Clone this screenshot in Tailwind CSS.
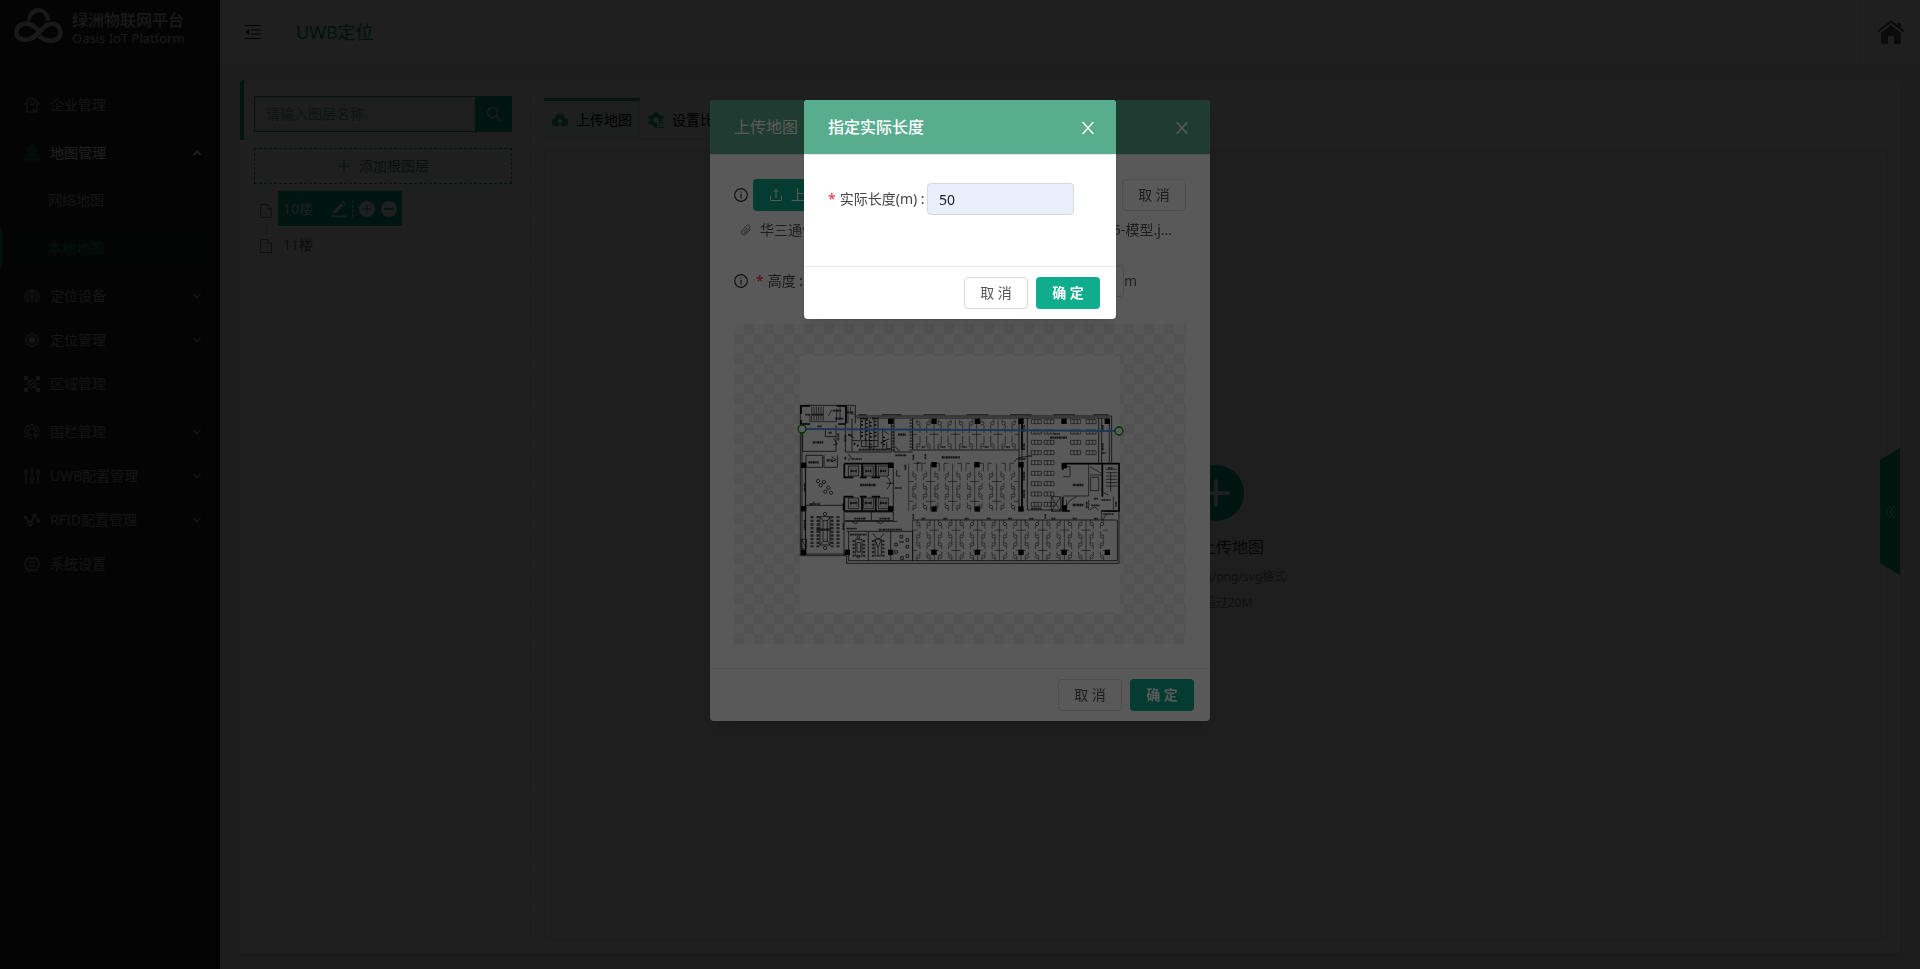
<!DOCTYPE html>
<html lang="zh-CN">
<head>
    <meta charset="UTF-8">
    <meta name="viewport" content="width=device-width, initial-scale=1.0">
    <title>UWB定位 - 绿洲物联网平台</title>
    <script src="https://cdn.jsdelivr.net/npm/@tailwindcss/browser@4"></script>
</head>
<body class="h-screen overflow-hidden font-['Noto_Sans','Noto_Sans_CJK_SC',sans-serif] text-sm text-[#444]">
    <div class="flex h-full">

        <!-- Sidebar -->
        <aside class="w-[220px] shrink-0 bg-[#2a2a2a] text-[#a6a6a6]">
            <div class="flex h-16 items-start gap-2 pl-3.5 pt-2 text-[#d0d0d0]">
                <svg class="h-[35px] w-[50px]" viewBox="0 0 50 35" fill="none" stroke="currentColor">
                    <path d="M15 10C18 -1 33 -1 34 13" stroke-width="4"/>
                    <path d="M14 16C14 9 19 4 25 3" stroke-width="2"/>
                    <path d="M24 22C16 13 4 14 2.500 23C1 33 14 34 21 28C29 21 33 14 40 16C48 18 49 30 41 32C35 34 30 32 25 28" stroke-width="4.500"/>
                </svg>
                <div class="pt-0.5">
                    <div class="text-base leading-5 font-medium">绿洲物联网平台</div>
                    <div class="text-[13px] leading-4">Oasis IoT Platform</div>
                </div>
            </div>
            <nav class="pt-[21px]">
                <ul>
                    <li class="mb-2"><a href="#" class="flex h-10 items-center pl-6">
                        <svg class="mr-2.5 size-4" viewBox="0 0 16 16" fill="none" stroke="currentColor" stroke-width="1.2"><path d="M3 15V7H1L5 3V1h2l1-.5L15 7h-2v5a2 2 0 0 1-4 0M3 15h10M7 4v3l3 1V5"/></svg>
                        企业管理</a></li>
                    <li class="mb-1"><a href="#" class="flex h-10 items-center pl-6 text-white">
                        <svg class="mr-2.5 size-4 text-[#02a87c]" viewBox="0 0 16 16" fill="none" stroke="currentColor" stroke-width="1.2"><path d="M8 11C5 8 4 6.500 4 4.500a4 4 0 0 1 8 0C12 6.500 11 8 8 11zM4 9H3L1 15h14l-2-6h-1M4 15l3-4M12 15l-3-4"/><circle cx="8" cy="4.500" r="1.500"/></svg>
                        地图管理
                        <svg class="ml-auto mr-[18px] size-2.5" viewBox="0 0 10 10" fill="none" stroke="currentColor" stroke-width="2"><path d="M1.500 7L5 3.500L8.500 7"/></svg></a></li>
                </ul>
                <ul class="bg-[#252525] pt-[3px]">
                    <li class="mb-2"><a href="#" class="flex h-10 items-center pl-12">网络地图</a></li>
                    <li class="pb-2"><a href="#" class="flex h-10 items-center border-l-2 border-[#02a87c] bg-[#1a2a25] pl-[46px] text-[#02a87c]">本地地图</a></li>
                </ul>
                <ul>
                    <li class="mb-1"><a href="#" class="flex h-10 items-center pl-6">
                        <svg class="mr-2.5 size-4" viewBox="0 0 16 16" fill="none" stroke="currentColor" stroke-width="1.200"><path d="M5 1.700a7 7 0 0 0 0 12.600M11 1.700a7 7 0 0 1 0 12.600M8 8v7M6 12a4.500 4.500 0 1 1 4 0M7 1v2h2V1"/><circle cx="8" cy="8" r="1.800"/></svg>
                        定位设备
                        <svg class="ml-auto mr-[18px] size-2.5" viewBox="0 0 10 10" fill="none" stroke="currentColor" stroke-width="1.500"><path d="M1.500 3L5 6.500L8.500 3"/></svg></a></li>
                    <li class="mb-1"><a href="#" class="flex h-10 items-center pl-6">
                        <svg class="mr-2.5 size-4" viewBox="0 0 16 16" fill="none" stroke="currentColor" stroke-width="1.200"><circle cx="8" cy="8" r="6"/><circle cx="8" cy="8" r="2.800" fill="currentColor"/><path d="M8 0v16M0 8h16"/></svg>
                        定位管理
                        <svg class="ml-auto mr-[18px] size-2.5" viewBox="0 0 10 10" fill="none" stroke="currentColor" stroke-width="1.500"><path d="M1.500 3L5 6.500L8.500 3"/></svg></a></li>
                    <li class="mb-2"><a href="#" class="flex h-10 items-center pl-6">
                        <svg class="mr-2.5 size-4" viewBox="0 0 16 16" fill="none" stroke="currentColor" stroke-width="1.300"><path d="M0 0h4v4H0zM12 0h4v4h-4zM0 12h4v4H0zM12 12h4v4h-4z" fill="currentColor" stroke="none"/><path d="M3 9L9 3M3 13L13 3M7 13L13 7M4 4l2 2M10 10l3 3"/></svg>
                        区域管理</a></li>
                    <li class="mb-1"><a href="#" class="flex h-10 items-center pl-6">
                        <svg class="mr-2.5 size-4" viewBox="0 0 16 16" fill="none" stroke="currentColor" stroke-width="1.300"><path d="M8 15L2.500 12.500L.8 7L3.500 2L8 .8L13 2.500L15 7L14 9"/><path d="M8 11.500L5 10.500L4 7L6.500 4.200H10L12 7V8.500"/><path d="M9 9l6.500 2.300-2.700 1-1 2.900z" fill="currentColor" stroke="none"/></svg>
                        围栏管理
                        <svg class="ml-auto mr-[18px] size-2.5" viewBox="0 0 10 10" fill="none" stroke="currentColor" stroke-width="1.500"><path d="M1.500 3L5 6.500L8.500 3"/></svg></a></li>
                    <li class="mb-1"><a href="#" class="flex h-10 items-center pl-6">
                        <svg class="mr-2.5 size-4" viewBox="0 0 16 16" fill="none" stroke="currentColor" stroke-width="1.400"><path d="M2 0v2.500M2 6.500V16M8 0v8.500M8 12.500V16M14 0v2.500M14 6.500V16"/><circle cx="2" cy="4.500" r="1.600"/><circle cx="8" cy="10.500" r="1.600"/><circle cx="14" cy="4.500" r="1.600"/></svg>
                        UWB配置管理
                        <svg class="ml-auto mr-[18px] size-2.5" viewBox="0 0 10 10" fill="none" stroke="currentColor" stroke-width="1.500"><path d="M1.500 3L5 6.500L8.500 3"/></svg></a></li>
                    <li class="mb-1"><a href="#" class="flex h-10 items-center pl-6">
                        <svg class="mr-2.5 size-4" viewBox="0 0 16 16" fill="none" stroke="currentColor" stroke-width="1.400"><path d="M1.500 6l3.500 4M7.500 10L10.500 3L14.500 9"/><circle cx="6" cy="11.500" r="2"/><path d="M0 4h3v3H0zM9 1.500h3v3H9zM13 7.500h3v3h-3z" fill="currentColor" stroke="none"/></svg>
                        RFID配置管理
                        <svg class="ml-auto mr-[18px] size-2.5" viewBox="0 0 10 10" fill="none" stroke="currentColor" stroke-width="1.500"><path d="M1.500 3L5 6.500L8.500 3"/></svg></a></li>
                    <li><a href="#" class="flex h-10 items-center pl-6">
                        <svg class="mr-2.5 size-4" viewBox="0 0 16 16" fill="none" stroke="currentColor" stroke-width="1.400"><path d="M5 1.500l1.500 1h3l1.500-1 2 1.200v2L14 6l1 .7v2.600L14 10l-1 1.500v2l-2 1.200-1.500-1h-3L5 14.700l-2-1.200v-2L2 10l-1-.7V6.700L2 6l1-1.300v-2z"/><circle cx="8" cy="8" r="2.400"/></svg>
                        系统设置</a></li>
                </ul>
            </nav>
        </aside>

        <div class="flex min-w-0 flex-1 flex-col bg-[#f0f0f0]">
            <!-- Top bar -->
            <header class="flex h-16 shrink-0 items-center bg-white pl-[25px]">
                <button type="button" aria-label="收起菜单">
                    <svg class="h-4 w-4" viewBox="0 0 16 16" fill="none" stroke="#333" stroke-width="1.200"><path d="M0 1.500h16M5.500 6h10.500M5.500 10h10.500M0 14.500h16"/><path d="M4 5v6L.5 8z" fill="#333" stroke="none"/></svg>
                </button>
                <h1 class="ml-[35px] text-lg text-[#0a9a76]">UWB定位</h1>
                <a href="#" aria-label="首页" class="ml-auto flex h-full w-[60px] items-center justify-center border-l border-[#e4e4e4]">
                    <svg class="h-6 w-7" viewBox="0 0 28 24" fill="#5c5c5c"><path d="M14 5L4 13v9a2 2 0 0 0 2 2h5v-8h6v8h5a2 2 0 0 0 2-2v-9z"/><path d="M1 11.500L14 1.500L27 11.500" fill="none" stroke="#fff" stroke-width="5"/><path d="M20 3h4v5l-4-3z"/><path d="M1 11.500L14 1.500L27 11.500" fill="none" stroke="#5c5c5c" stroke-width="2"/></svg>
                </a>
            </header>

            <main class="relative mx-5 mb-4 mt-4 flex min-h-0 flex-1 rounded bg-white py-3 pr-3 shadow-md">
                <div class="absolute left-0 top-0 h-[60px] w-1 rounded-tl bg-[#02b07c]"></div>

                <!-- Layer tree -->
                <section class="my-1 w-[291px] shrink-0 border-r border-dashed border-[#d4d4d4] pl-3.5 pr-[18px]">
                    <form class="flex h-9">
                        <input type="text" aria-label="图层名称" placeholder="请输入图层名称" class="min-w-0 flex-1 border border-[#0fa384] bg-[#eef7f4] pl-[11px] placeholder-[#84a69c]">
                        <button type="button" aria-label="搜索" class="flex w-9 items-center justify-center bg-[#02b07c]">
                            <svg class="size-4" viewBox="0 0 16 16" fill="none" stroke="#fff" stroke-width="1.200"><circle cx="6.500" cy="6.500" r="5"/><path d="M10 10l5 5"/></svg>
                        </button>
                    </form>
                    <button type="button" class="mt-4 flex h-9 w-full items-center justify-center gap-2 border border-dashed border-[#0fa384] text-[#54887a]">
                        <svg class="size-3.5" viewBox="0 0 14 14" fill="none" stroke="currentColor" stroke-width="1.200"><path d="M7 1v12M1 7h12"/></svg>
                        添加根图层
                    </button>
                    <ul class="mt-[7px] pl-1.5">
                        <li class="flex h-[35px] items-center">
                            <svg class="mr-1.5 mt-1 h-3.5 w-3" viewBox="0 0 12 14" fill="none" stroke="#8a8a8a"><path d="M.5.5h7l4 4v9H.5zM7.500.5v4h4"/></svg>
                            <div class="flex h-full w-[124px] items-center bg-[#02b07c] pl-[5px] text-white">
                                10楼
                                <svg class="ml-auto size-4" viewBox="0 0 16 16" fill="#fff"><path d="M0 14.500h16V16H0zM1.500 13l1-3.500L10 2l2.500 2.500L5 12zM11 1l1-1 2.500 2.500-1 1z"/></svg>
                                <span class="ml-[5px] h-[17px] border-l border-dashed border-white"></span>
                                <svg class="ml-1.5 size-4" viewBox="0 0 16 16"><circle cx="8" cy="8" r="8" fill="#fff"/><path d="M8 4v8M4 8h8" stroke="#02b07c"/></svg>
                                <svg class="ml-1.5 mr-[5px] size-4" viewBox="0 0 16 16"><circle cx="8" cy="8" r="8" fill="#fff"/><path d="M3 8h10" stroke="#02b07c" stroke-width="1.500"/></svg>
                            </div>
                        </li>
                        <li class="flex h-[38px] items-center">
                            <svg class="mr-1.5 h-[38px] w-3 shrink-0" viewBox="0 0 12 38" fill="none" stroke="#8a8a8a"><path d="M6.500 0v8" stroke="#d0d0d0"/><path d="M.5 13.500h7l4 4v9H.5zM7.500 13.500v4h4"/></svg>
                            <span class="pl-[5px] text-[#666]">11楼</span>
                        </li>
                    </ul>
                </section>

                <!-- Map area -->
                <section class="flex min-w-0 flex-1 flex-col pl-[13px]">
                    <div class="mt-1.5 flex h-10 w-fit shadow">
                        <button type="button" class="flex w-24 items-center gap-2 border-r border-t-[3px] border-r-[#ddd] border-t-[#02b07c] bg-[#f0f7f5] pl-2 text-black">
                            <svg class="h-4 w-4" viewBox="0 0 16 16" fill="#02b07c"><path d="M8 2a4.500 4.500 0 0 1 4.300 4A4 4 0 0 1 12 14H9V10h2L8 6 5 10h2v4H4A4 4 0 0 1 3.700 6 4.500 4.500 0 0 1 8 2z"/></svg>
                            上传地图
                        </button>
                        <button type="button" class="flex w-28 items-center gap-2 pl-2 pt-[3px] text-black">
                            <svg class="h-4 w-4" viewBox="0 0 16 16"><circle cx="8" cy="8" r="4.500" fill="none" stroke="#02b07c" stroke-width="3.500"/><path d="M8 0v3M8 13v3M1 4l3 2M1 12l3-2M12 6l3-2" stroke="#02b07c" stroke-width="3.500"/><path d="M9 9h7v7H9z" fill="#fff"/><path d="M10 10.500h6M10 13h6M10 15.500h6" stroke="#02b07c"/></svg>
                            设置比例尺
                        </button>
                    </div>
                    <div class="mt-3 flex flex-1 flex-col items-center rounded border border-[#e2e4e4] bg-[#f5f5f5] pt-[314px]">
                        <svg class="size-14" viewBox="0 0 56 56"><circle cx="28" cy="28" r="28" fill="#02b07c"/><path d="M28 16v24M16 28h24" stroke="#fff" stroke-width="4" stroke-linecap="round"/></svg>
                        <p class="mt-3.5 text-base">点击上传地图</p>
                        <p class="mt-2.5 text-xs text-[#888]">图片支持jpg/png/svg格式</p>
                        <p class="mt-2.5 text-xs text-[#888]">不能超过20M</p>
                    </div>
                </section>

                <button type="button" aria-label="展开" class="absolute right-0 top-[368px] flex h-[127px] w-5 items-center justify-center bg-[#02b07c] [clip-path:polygon(0_12px,100%_0,100%_100%,0_115px)]">
                    <svg class="mr-0 h-3 w-2.5" viewBox="0 0 10 12" fill="none" stroke="#fff"><path d="M5 0L.700 6L5 12M9.500 0L5.200 6L9.500 12"/></svg>
                </button>
            </main>
        </div>
    </div>

    <!-- Upload dialog -->
    <div class="fixed inset-0 bg-black/65 pt-[100px]">
        <div role="dialog" aria-label="上传地图" class="mx-auto w-[500px] overflow-hidden rounded bg-white shadow-lg">
            <div class="flex h-[55px] items-center justify-between border-b border-[#e8e8e8] bg-[#58ad8e] px-6 text-white">
                <h2 class="text-base">上传地图</h2>
                <button type="button" aria-label="关闭" class="-mr-0.5 mt-0.5">
                    <svg class="size-3" viewBox="0 0 12 12" fill="none" stroke="#fff" stroke-width="1.500"><path d="M.5 0l11 12M11.500 0l-11 12"/></svg>
                </button>
            </div>
            <div class="p-6">
                <div class="flex items-center">
                    <svg class="size-3.5" viewBox="0 0 14 14" fill="none" stroke="#333" stroke-width="1.200"><circle cx="7" cy="7" r="6.300"/><path d="M7 6v4.500M7 3.500v1.200"/></svg>
                    <button type="button" class="ml-[5px] flex h-8 items-center gap-2 rounded bg-[#0fad8d] px-4 text-white">
                        <svg class="size-3.5" viewBox="0 0 14 14" fill="none" stroke="#fff"><path d="M1.500 8v4.500h11V8M7 10V1.500M4.500 4L7 1.500L9.500 4"/></svg>
                        上传文件
                    </button>
                    <button type="button" class="ml-auto h-8 w-16 rounded border border-[#d9d9d9] text-[#555]">取 消</button>
                </div>
                <div class="mt-2 flex h-[22px] items-center text-[#555]">
                    <svg class="ml-1.5 mr-2 size-3" viewBox="0 0 12 12" fill="none" stroke="#777"><path d="M10.500 5L6 10a2.500 2.500 0 0 1-4-3.300L6.500 1.700a1.900 1.900 0 0 1 3 2.400L5.500 8.500a.9.9 0 0 1-1.500-1L7 4"/></svg>
                    <span class="w-0 flex-1 truncate">华三通信技术有限公司办公楼十层平面图</span>
                    <span class="mr-3.5">5-模型.j...</span>
                </div>
                <div class="mt-6 flex h-8 items-center">
                    <svg class="size-3.5" viewBox="0 0 14 14" fill="none" stroke="#333" stroke-width="1.200"><circle cx="7" cy="7" r="6.300"/><path d="M7 6v4.500M7 3.500v1.200"/></svg>
                    <label for="height" class="ml-2 shrink-0"><span class="mr-1 text-[#f5222d]">*</span>高度 :</label>
                    <input id="height" type="text" class="ml-2 h-8 min-w-0 flex-1 rounded border border-[#d9d9d9] px-3">
                    <span class="w-[62px] text-[#666]">m</span>
                </div>
                <div class="mt-[27px] flex h-80 items-center justify-center bg-[conic-gradient(#ebebeb_25%,#fafafa_0_50%,#ebebeb_0_75%,#fafafa_0)] bg-[length:20px_20px]">
                    <svg id="plan" class="h-64 w-80 overflow-visible bg-white" viewBox="300 138 960 768" fill="none" stroke="#000">
                        <g id="desks" stroke-width="3" stroke-opacity=".5"></g>
                        <!-- outer walls -->
                        <g stroke-width="3" stroke-opacity=".7">
                            <path d="M301 286H466V318H1235V458M301 286V737H440V760H1257V600M306 340V732H436M446 752H1252V630M470 324H1228V458M317 470V730M308 460H316V730"/>
                            <path d="M466 318V340M440 340H436V426H574V324M582 324V426H638M308 345V424H408V380M408 345V380H376V360M318 436V472H368V436ZM372 436V472H412V436M957 324V600M966 324V600M982 324V600H1085M1196 324V458M1205 324V458M638 420H957M638 630H1250M436 606H580V632H436M514 606V632M432 586V737M316 586H432M432 634H592M440 664H638V752M505 664V752M572 664V752M446 664V752M580 460V600M638 324V420"/>
                            <path d="M475 314H500M545 314H605M670 314H735M800 314H865M930 314H995M1060 314H1125M1180 314H1225"/>
                        </g>
                        <!-- lifts, stairs and core walls -->
                        <path d="M303 288H330M410 288H438V340M303 288V312M303 330V342H330M436 342H415M433 461H580M433 461V502H460M480 502H500M515 502H540M433 603H580M433 603V560H460M480 560H500M515 560H540M486 461V502M527 461V502M486 560V603M527 560V603M1088 461H1257V603H1205M1088 461V480M1207 461V560M1257 461V510M1088 560V603H1110M966 324V420M966 460V600" stroke-width="5"/>
                        <g stroke-width="3" stroke-opacity=".7">
                            <path d="M445 468H476V498H445ZM491 468H520V498H491ZM535 468H565V498H535ZM445 564H476V596H445ZM491 564H520V596H491ZM535 564H565V596H535Z"/>
                            <path d="M451 474H470V492H451ZM497 474H514V492H497ZM541 474H559V492H541ZM451 570H470V590H451ZM497 570H514V590H497ZM541 570H559V590H541Z" stroke-width="2" stroke-opacity=".4"/>
                            <path d="M335 290V332M342 290V332M349 290V332M356 290V332M363 290V332M370 290V332M330 312V335H410V295M395 300L385 318M420 292V332M444 290V340M452 290V312H464M1218 478H1252M1218 488H1252M1218 498H1252M1218 508H1252M1218 518H1252M1218 528H1252M1232 488V545M1090 470H1110V500H1090M1166 461V558H1090M1170 470L1204 490M1172 502H1196V542H1172ZM1204 495H1170M1205 545L1225 555M1240 560V600M1054 560H1082V604H1054ZM1056 562L1068 582L1080 562M1056 602L1068 582L1080 602M1090 600L1112 570L1130 560M1100 570V600M1166 570V600M1170 600L1184 590L1196 602M1205 600V632M1215 604H1250M1208 630L1220 612M304 688H320V716H304ZM306 690L318 714" stroke-opacity=".6"/>
                            <path d="M560 500Q582 515 560 538M560 520H580M590 480V498H602M400 385L412 402L400 405M395 440L408 450L395 455M445 432L453 442L445 452M455 634L468 642L475 634M530 634L542 642L550 634M942 456Q950 440 982 440M585 410L600 424M330 586L345 574"/>
                        </g>
                        <g id="columns" fill="#000" stroke="none"></g>
                        <!-- washrooms -->
                        <path d="M456 326V424M482 330V392M496 330V392M508 330V420M522 330V420M534 330V392M548 356V420M456 392H480M484 392H534V410H484ZM498 384V410M444 372L462 384M540 400L568 386M552 362L566 374M560 396V416H574" stroke-width="3" stroke-opacity=".7"/>
                        <path d="M486 332V385M500 328V380M512 335V415M526 332V385M552 380V412M462 400L478 410" stroke-width="6" stroke-dasharray="4 7"/>
                        <path d="M579 328V426M632 328V426" stroke-width="7" stroke-opacity=".5" stroke-dasharray="5 4"/>
                        <!-- room labels -->
                        <g stroke-width="7" stroke-opacity=".75" stroke-dasharray="7 1 4 1">
                            <path d="M338 397H370M325 457H356M380 451H398M594 374H618M480 525H528M725 442H780M1050 383H1102M1118 525H1150M1118 585H1150M350 659H392M452 483H470M496 483H514M540 483H558M450 579H472M494 579H516M540 579H562"/>
                            <path d="M328 582H360M455 447H486M586 436H620M462 626H498M538 626H570M536 659H606M440 656H470M450 674H500M585 534H606M993 596H1024M955 447H978M985 438H996M1224 474H1240M1205 429H1218M1204 570H1232M1174 586H1200M1062 372H1080M1182 566H1194M1210 612H1240M598 696H612M316 314H330M336 314H370M398 302H424M405 326H430M440 307H460M480 326H504M516 326H536M476 419H570M352 349H366M386 368H396M444 375H456M650 459H664M665 411H676M724 411H736M788 411H800M854 411H866M918 411H930M665 626H676M730 626H742M794 626H806M860 626H872M924 626H936M988 626H1000M1054 626H1066M1118 626H1130M1182 626H1194" stroke-width="5"/>
                            <path d="M972 345V365M972 400V420M972 485V512M972 540V565M1208 345V365M1208 400V422M314 520V545M314 630V660M430 580V600M430 640V660M415 370V392M640 434V450M676 432V448M616 464V480M1036 612V626M640 612V628M1160 575V595M1248 575V590M436 440V450M436 375V395" stroke-width="5"/>
                        </g>
                        <!-- meeting room tables -->
                        <g stroke-width="3" stroke-opacity=".65">
                            <path d="M360 620H390V705H360ZM369 632H382V694H369ZM360 620L369 632M390 620L382 632M360 705L369 694M390 705L382 694M467 688H486V738H467ZM471 698H482V726H471ZM525 688H544V738H525ZM518 670L530 685H540L552 670M525 688L534 712L544 688M534 712V738"/>
                            <path d="M336 618V712M354 618V712M396 618V712M414 618V712" stroke-width="9" stroke-dasharray="7 4"/>
                            <path d="M461 690V740M492 690V740M519 690V740M550 690V740" stroke-width="7" stroke-dasharray="6 5"/>
                            <path d="M584 700h8v8h-8zM584 722h8v8h-8zM600 676h8v8h-8zM618 686h8v8h-8zM618 706h8v8h-8zM618 734h8v8h-8zM602 740h8v8h-8z"/>
                            <circle cx="375" cy="612" r="5"/><circle cx="375" cy="714" r="5"/><circle cx="475" cy="682" r="4"/><circle cx="475" cy="740" r="4"/>
                            <circle cx="354" cy="513" r="5"/><circle cx="372" cy="516" r="5"/><circle cx="362" cy="526" r="5"/><circle cx="385" cy="533" r="5"/><circle cx="376" cy="545" r="5"/><circle cx="393" cy="548" r="5"/>
                        </g>
                        <!-- measured line -->
                        <path d="M306 357L1257 363" stroke="#4d9bff" stroke-width="6"/>
                        <g fill="#fff" stroke="#009000" stroke-width="4"><circle cx="306" cy="357" r="12"/><circle cx="1257" cy="363" r="12"/></g>
                    </svg>
                </div>
            </div>
            <div class="flex justify-end gap-2 border-t border-[#e8e8e8] px-4 py-2.5">
                <button type="button" class="h-8 w-16 rounded border border-[#d9d9d9] text-[#555]">取 消</button>
                <button type="button" class="h-8 w-16 rounded bg-[#0fad8d] font-bold text-white">确 定</button>
            </div>
        </div>
    </div>

    <!-- Length dialog -->
    <div class="fixed inset-0 bg-black/65 pt-[100px]">
        <div role="dialog" aria-label="指定实际长度" class="mx-auto w-[312px] overflow-hidden rounded bg-white shadow-lg">
            <div class="flex h-[55px] items-center justify-between border-b border-[#e8e8e8] bg-[#58ad8e] px-6 text-white">
                <h2 class="text-base font-medium">指定实际长度</h2>
                <button type="button" aria-label="关闭" class="-mr-0.5 mt-0.5">
                    <svg class="size-3" viewBox="0 0 12 12" fill="none" stroke="#fff" stroke-width="1.500"><path d="M.5 0l11 12M11.500 0l-11 12"/></svg>
                </button>
            </div>
            <div class="flex h-[111px] items-start px-6 pt-7">
                <label for="length" class="w-[99px] whitespace-nowrap leading-8"><span class="mr-1 text-[#f5222d]">*</span>实际长度(m) :</label>
                <input id="length" type="text" value="50" class="h-8 w-[147px] rounded border border-[#d9d9d9] bg-[#e8f0fe] px-[11px] text-[#222]">
            </div>
            <div class="flex justify-end gap-2 border-t border-[#e8e8e8] px-4 py-2.5">
                <button type="button" class="h-8 w-16 rounded border border-[#d9d9d9] text-[#555]">取 消</button>
                <button type="button" class="h-8 w-16 rounded bg-[#0fad8d] font-bold text-white">确 定</button>
            </div>
        </div>
    </div>

    <script>
        // One bay: partition on the left, desk corners bevelled round four chairs
        function desk(x, y, w, h) {
            const m = y + h / 2;
            const b = y + h;
            const r = x + w;
            return `<path d="M${x} ${y}V${b}M${x} ${m}H${x + 14}M${r - 14} ${m}H${r}` +
                `M${x + 14} ${y}L${x + 11} ${y + 8}M${x + 22} ${y + 17}V${m - 4}M${x + 14} ${b}L${x + 11} ${b - 8}M${x + 22} ${b - 17}V${m + 4}` +
                `M${r - 14} ${y}L${r - 11} ${y + 8}M${r - 22} ${y + 17}V${m - 4}M${r - 14} ${b}L${r - 11} ${b - 8}M${r - 22} ${b - 17}V${m + 4}"/>` +
                [[17, y + 12], [w - 17, y + 12], [17, b - 12], [w - 17, b - 12]]
                    .map(([dx, cy]) => `<circle cx="${x + dx}" cy="${cy}" r="5"/>`).join('');
        }

        let out = '';
        for (let i = 0; i < 5; i++) {
            out += desk(638 + i * 64, 328, 64, 90);
            out += desk(626 + i * 66, 484, 66, 61) + desk(626 + i * 66, 545, 66, 58);
            out += `<path d="M${626 + i * 66} 460V484M${640 + i * 66} 460h12v24M${678 + i * 66} 460h-12v24"/>`;
        }
        for (let i = 0; i < 9; i++) {
            out += desk(638 + i * 65, 630, 65, 61) + desk(638 + i * 65, 691, 65, 61);
        }
        // training room seats
        for (const y of [329, 360, 391, 422, 452, 484, 515, 546, 577]) {
            for (const x of y < 440 ? [994, 1032, 1112, 1158] : [994, 1032]) {
                out += `<path d="M${x} ${y}h30v12h-30zM${x + 10} ${y}v12M${x + 20} ${y}v12"/>`;
            }
        }
        document.getElementById('desks').innerHTML = out;

        const columns = [
            [572, 334], [702, 334], [832, 334], [963, 334], [1092, 334], [1222, 334],
            [311, 466], [572, 466], [702, 464], [831, 464], [963, 464], [1093, 467],
            [311, 596], [572, 596], [702, 597], [832, 597], [963, 597], [1093, 594],
            [311, 727], [442, 727], [572, 727], [702, 727], [832, 727], [963, 727], [1092, 727], [1222, 727]
        ];
        document.getElementById('columns').innerHTML = columns
            .map(([x, y]) => `<rect x="${x - 8}" y="${y - 8}" width="16" height="16"/>`).join('');
    </script>
</body>
</html>
